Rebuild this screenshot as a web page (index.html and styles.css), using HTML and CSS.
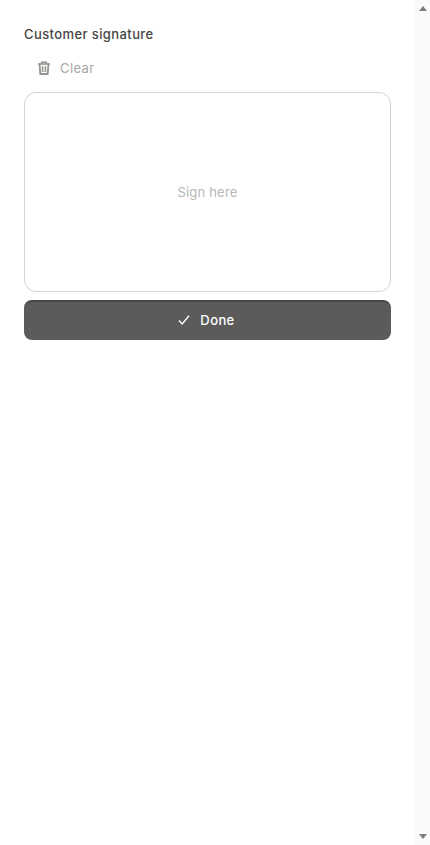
FILE: index.html
```html
<!DOCTYPE html>
<html lang="en">
<head>
<meta charset="utf-8">
<title>Customer signature</title>
<link rel="stylesheet" href="styles.css">
</head>
<body>
<div class="page">
  <main class="content">
    <div class="label">Customer signature</div>
    <button class="clear" type="button">
      <svg class="trash" viewBox="0 0 14 14" width="14" height="14" fill="none" stroke="#939390">
        <path d="M1 3h12" stroke-width="1.6"/>
        <path d="M4.6 3V1.2h4.8V3" stroke-width="1.4"/>
        <path d="M2.6 3.4l.7 9.6h7.4l.7-9.6" stroke-width="1.8"/>
        <path d="M5.6 5.2v5.8M8.4 5.2v5.8" stroke-width="1.6"/>
      </svg>
      <span>Clear</span>
    </button>
    <div class="pad">Sign here</div>
    <button class="done" type="button">
      <svg viewBox="0 0 12 12" width="12" height="12" fill="none" stroke="#fff" stroke-width="1.4">
        <path d="M1 6.6l3.2 3.4L11 1.8"/>
      </svg>
      <span>Done</span>
    </button>
  </main>
  <aside class="scrollbar">
    <span class="arrow up"></span>
    <span class="arrow down"></span>
  </aside>
</div>
</body>
</html>
```
FILE: styles.css
```css
* { box-sizing: border-box; }
html, body { margin: 0; height: 100%; background: #fff; }
body { font-family: "Inter", "Liberation Sans", sans-serif; overflow: hidden; }
.page { display: flex; height: 845px; }
.content { flex: 1; padding: 24px 24px 0; display: flex; flex-direction: column; }
.label { font-size: 13px; line-height: 20px; color: #454543; font-weight: 500; letter-spacing: .4px; }
.clear {
  margin-top: 14px; height: 20px; padding: 0 0 0 13px; border: 0; background: none;
  display: flex; align-items: center; gap: 9px; align-self: flex-start;
  font: 400 13px/20px "Inter", "Liberation Sans", sans-serif; color: #a8a8a8; letter-spacing: .4px;
}
.pad {
  margin-top: 14px; height: 200px; border: 1px solid #d4d4d2; border-radius: 12px;
  display: flex; align-items: center; justify-content: center;
  font-size: 13px; color: #b6b6b6; letter-spacing: .2px;
}
.done {
  margin-top: 8px; height: 40px; border: 0; border-top: 2px solid #454543; border-radius: 8px;
  background: #5c5b59; color: #fff; display: flex; align-items: center; justify-content: center; gap: 10px;
  padding: 0 2px 2px 0;
  font: 500 13px/20px "Inter", "Liberation Sans", sans-serif; letter-spacing: .4px;
}
.scrollbar {
  width: 15px; background: #fafafa; display: flex; flex-direction: column; justify-content: space-between;
  align-items: center; padding: 6px 0;
}
.arrow { width: 0; height: 0; border-left: 4.5px solid transparent; border-right: 4.5px solid transparent; }
.up { border-bottom: 5px solid #7d7d7d; }
.down { border-top: 5px solid #7d7d7d; }
```
